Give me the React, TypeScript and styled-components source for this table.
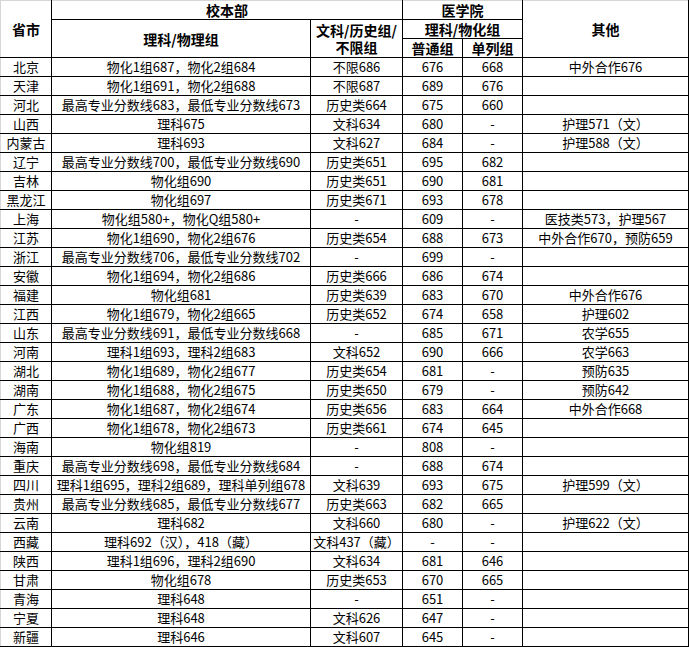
import React from 'react';
import styled, { createGlobalStyle } from 'styled-components';

const GlobalStyle = createGlobalStyle`
	html, body {
		margin: 0;
		padding: 0;
		background: #ffffff;
	}
`;

const Table = styled.table`
	table-layout: fixed;
	border-collapse: collapse;
	width: 689px;
	font-family: "Noto Sans CJK SC", sans-serif;
	font-size: 13px;
	color: #000;

	& td, & th {
		border: 1px solid #000;
		padding: 0;
		text-align: center;
		white-space: nowrap;
		overflow: hidden;
	}

	& tr > *:first-child {
		border-left-color: #d6d6d6;
	}

	& thead tr:first-child > * {
		border-top-color: #d6d6d6;
	}
`;

const HeadCell = styled.th<{ $wrap?: boolean }>`
	height: 18px;
	line-height: ${(p) => (p.$wrap ? '17px' : '18px')};
	font-size: 14px;
	font-weight: 700;
	white-space: ${(p) => (p.$wrap ? 'normal' : 'nowrap')} !important;
`;

const Cell = styled.td`
	height: 18px;
	line-height: 18px;
`;

interface Row {
	province: string,
	science: string,
	arts: string,
	normal: string,
	single: string,
	other: string,
}

const rows: Row[] = [
	{ province: '北京', science: '物化1组687，物化2组684', arts: '不限686', normal: '676', single: '668', other: '中外合作676' },
	{ province: '天津', science: '物化1组691，物化2组688', arts: '不限687', normal: '689', single: '676', other: '' },
	{ province: '河北', science: '最高专业分数线683，最低专业分数线673', arts: '历史类664', normal: '675', single: '660', other: '' },
	{ province: '山西', science: '理科675', arts: '文科634', normal: '680', single: '-', other: '护理571（文）' },
	{ province: '内蒙古', science: '理科693', arts: '文科627', normal: '684', single: '-', other: '护理588（文）' },
	{ province: '辽宁', science: '最高专业分数线700，最低专业分数线690', arts: '历史类651', normal: '695', single: '682', other: '' },
	{ province: '吉林', science: '物化组690', arts: '历史类651', normal: '690', single: '681', other: '' },
	{ province: '黑龙江', science: '物化组697', arts: '历史类671', normal: '693', single: '678', other: '' },
	{ province: '上海', science: '物化组580+，物化Q组580+', arts: '-', normal: '609', single: '-', other: '医技类573，护理567' },
	{ province: '江苏', science: '物化1组690，物化2组676', arts: '历史类654', normal: '688', single: '673', other: '中外合作670，预防659' },
	{ province: '浙江', science: '最高专业分数线706，最低专业分数线702', arts: '-', normal: '699', single: '-', other: '' },
	{ province: '安徽', science: '物化1组694，物化2组686', arts: '历史类666', normal: '686', single: '674', other: '' },
	{ province: '福建', science: '物化组681', arts: '历史类639', normal: '683', single: '670', other: '中外合作676' },
	{ province: '江西', science: '物化1组679，物化2组665', arts: '历史类652', normal: '674', single: '658', other: '护理602' },
	{ province: '山东', science: '最高专业分数线691，最低专业分数线668', arts: '-', normal: '685', single: '671', other: '农学655' },
	{ province: '河南', science: '理科1组693，理科2组683', arts: '文科652', normal: '690', single: '666', other: '农学663' },
	{ province: '湖北', science: '物化1组689，物化2组677', arts: '历史类654', normal: '681', single: '-', other: '预防635' },
	{ province: '湖南', science: '物化1组688，物化2组675', arts: '历史类650', normal: '679', single: '-', other: '预防642' },
	{ province: '广东', science: '物化1组687，物化2组674', arts: '历史类656', normal: '683', single: '664', other: '中外合作668' },
	{ province: '广西', science: '物化1组678，物化2组673', arts: '历史类661', normal: '674', single: '645', other: '' },
	{ province: '海南', science: '物化组819', arts: '-', normal: '808', single: '-', other: '' },
	{ province: '重庆', science: '最高专业分数线698，最低专业分数线684', arts: '-', normal: '688', single: '674', other: '' },
	{ province: '四川', science: '理科1组695，理科2组689，理科单列组678', arts: '文科639', normal: '693', single: '675', other: '护理599（文）' },
	{ province: '贵州', science: '最高专业分数线685，最低专业分数线677', arts: '历史类663', normal: '682', single: '665', other: '' },
	{ province: '云南', science: '理科682', arts: '文科660', normal: '680', single: '-', other: '护理622（文）' },
	{ province: '西藏', science: '理科692（汉），418（藏）', arts: '文科437（藏）', normal: '-', single: '-', other: '' },
	{ province: '陕西', science: '理科1组696，理科2组690', arts: '文科634', normal: '681', single: '646', other: '' },
	{ province: '甘肃', science: '物化组678', arts: '历史类653', normal: '670', single: '665', other: '' },
	{ province: '青海', science: '理科648', arts: '-', normal: '651', single: '-', other: '' },
	{ province: '宁夏', science: '理科648', arts: '文科626', normal: '647', single: '-', other: '' },
	{ province: '新疆', science: '理科646', arts: '文科607', normal: '645', single: '-', other: '' },
];

function App() {
	return (
		<>
			<GlobalStyle />
			<Table>
				<colgroup>
					<col style={{ width: 51 }} />
					<col style={{ width: 259 }} />
					<col style={{ width: 92 }} />
					<col style={{ width: 60 }} />
					<col style={{ width: 60 }} />
					<col />
				</colgroup>
				<thead>
					<tr>
						<HeadCell rowSpan={3}>省市</HeadCell>
						<HeadCell colSpan={2}>校本部</HeadCell>
						<HeadCell colSpan={2}>医学院</HeadCell>
						<HeadCell rowSpan={3}>其他</HeadCell>
					</tr>
					<tr>
						<HeadCell rowSpan={2}>理科/物理组</HeadCell>
						<HeadCell rowSpan={2} $wrap>文科/历史组/不限组</HeadCell>
						<HeadCell colSpan={2}>理科/物化组</HeadCell>
					</tr>
					<tr>
						<HeadCell>普通组</HeadCell>
						<HeadCell>单列组</HeadCell>
					</tr>
				</thead>
				<tbody>
					{rows.map((row) => (
						<tr key={row.province}>
							<Cell>{row.province}</Cell>
							<Cell>{row.science}</Cell>
							<Cell>{row.arts}</Cell>
							<Cell>{row.normal}</Cell>
							<Cell>{row.single}</Cell>
							<Cell>{row.other}</Cell>
						</tr>
					))}
				</tbody>
			</Table>
		</>
	);
}

export default App;
